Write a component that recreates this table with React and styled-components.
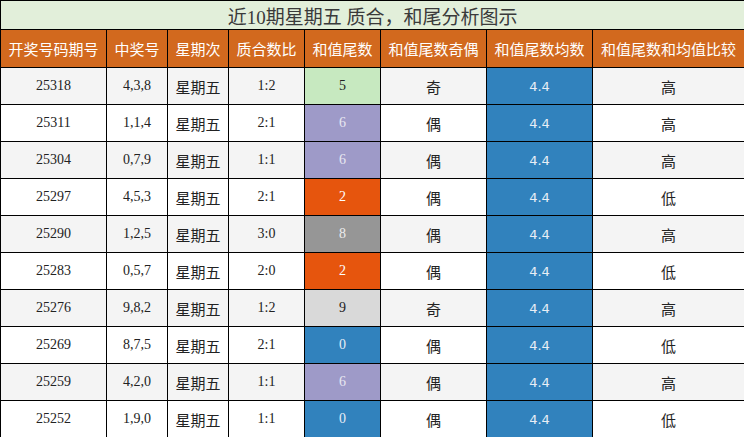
import React from 'react';
import styled, { createGlobalStyle } from 'styled-components';

const GlobalStyle = createGlobalStyle`
  body {
    margin: 0;
    background: #fff;
  }
`;

const Table = styled.table`
  width: 744px;
  border-collapse: collapse;
  table-layout: fixed;
  font-family: "Liberation Serif", "Noto Sans CJK SC", serif;
  font-size: 14px;
  color: #222;
`;

const TitleCell = styled.th`
  height: 28px;
  padding: 0;
  border: 1px solid #000;
  background: #e2efda;
  color: #3a3a3a;
  font-weight: normal;
  font-size: 19px;
  font-family: "Liberation Serif", "Noto Sans CJK SC", serif;
  text-align: center;
`;

const HeadCell = styled.th`
  height: 37px;
  padding: 0;
  border: 1px solid #000;
  background: #d2691e;
  color: #fff;
  font-weight: normal;
  font-size: 15px;
  font-family: "Noto Sans CJK SC", sans-serif;
  text-align: center;
  white-space: nowrap;
`;

const Row = styled.tr`
  background: ${(p) => (p.$odd ? '#f4f4f4' : '#fff')};
`;

const Cell = styled.td`
  height: 36px;
  padding: 0;
  border: 1px solid #000;
  text-align: center;
  background: ${(p) => p.$bg || 'transparent'};
  color: ${(p) => p.$fg || '#222'};
  font-family: ${(p) =>
    p.$cjk
      ? '"Noto Sans CJK SC", sans-serif'
      : p.$sans
      ? '"DejaVu Sans", sans-serif'
      : '"Liberation Serif", serif'};
  font-size: ${(p) => (p.$cjk ? '15px' : p.$sans ? '13px' : '14px')};
`;

const tailColors = {
  0: ['#3182bd', '#e8eef6'],
  2: ['#e6550d', '#fff'],
  5: ['#c7e9c0', '#222'],
  6: ['#9e9ac8', '#e8e8f2'],
  8: ['#969696', '#ececec'],
  9: ['#d9d9d9', '#222'],
};

const rows = [
  ['25318', '4,3,8', '1:2', 5, '奇', '高'],
  ['25311', '1,1,4', '2:1', 6, '偶', '高'],
  ['25304', '0,7,9', '1:1', 6, '偶', '高'],
  ['25297', '4,5,3', '2:1', 2, '偶', '低'],
  ['25290', '1,2,5', '3:0', 8, '偶', '高'],
  ['25283', '0,5,7', '2:0', 2, '偶', '低'],
  ['25276', '9,8,2', '1:2', 9, '奇', '高'],
  ['25269', '8,7,5', '2:1', 0, '偶', '低'],
  ['25259', '4,2,0', '1:1', 6, '偶', '高'],
  ['25252', '1,9,0', '1:1', 0, '偶', '低'],
];

const widths = [106, 61, 61, 76, 76, 106, 106, 152];
const heads = ['开奖号码期号', '中奖号', '星期次', '质合数比', '和值尾数', '和值尾数奇偶', '和值尾数均数', '和值尾数和均值比较'];

export default function App() {
  return (
    <>
      <GlobalStyle />
      <Table>
        <colgroup>
          {widths.map((w, i) => (
            <col key={i} style={{ width: w }} />
          ))}
        </colgroup>
        <thead>
          <tr>
            <TitleCell colSpan={8}>近10期星期五 质合，和尾分析图示</TitleCell>
          </tr>
          <tr>
            {heads.map((h) => (
              <HeadCell key={h}>{h}</HeadCell>
            ))}
          </tr>
        </thead>
        <tbody>
          {rows.map((r, i) => {
            const [bg, fg] = tailColors[r[3]];
            return (
              <Row key={r[0]} $odd={i % 2 === 0}>
                <Cell>{r[0]}</Cell>
                <Cell>{r[1]}</Cell>
                <Cell $cjk>星期五</Cell>
                <Cell>{r[2]}</Cell>
                <Cell $bg={bg} $fg={fg}>{r[3]}</Cell>
                <Cell $cjk>{r[4]}</Cell>
                <Cell $sans $bg="#3182bd" $fg="#e8eef6">4.4</Cell>
                <Cell $cjk>{r[5]}</Cell>
              </Row>
            );
          })}
        </tbody>
      </Table>
    </>
  );
}
